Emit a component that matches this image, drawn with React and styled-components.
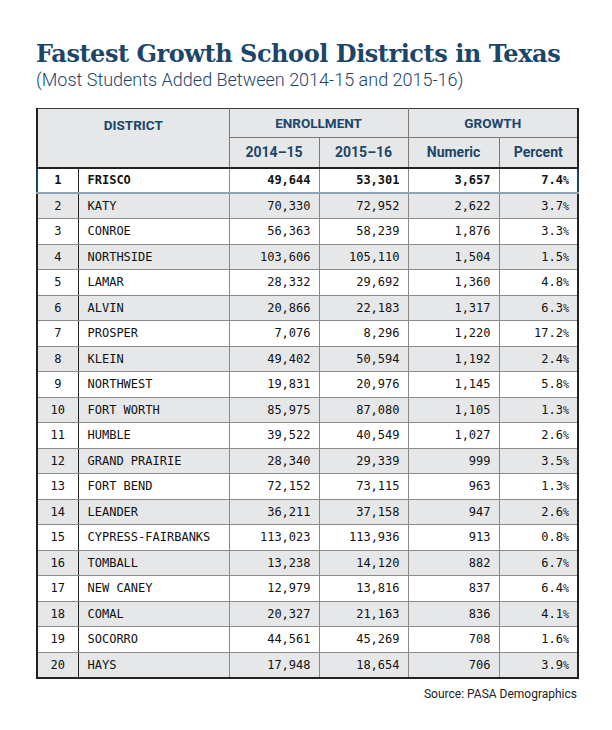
import React from "react";
import styled, { createGlobalStyle, css } from "styled-components";

const Global = createGlobalStyle`
  html, body { margin: 0; padding: 0; background: #ffffff; }
  body { font-family: Roboto, "Liberation Sans", sans-serif; }
`;

const BLUE = "#1b4669";

const Page = styled.div`
  width: 612px;
  height: 730px;
  box-sizing: border-box;
  padding: 40px 35px 0 36px;
  display: flex;
  flex-direction: column;
`;

const Title = styled.h1`
  margin: 0;
  font-family: "DejaVu Serif", serif;
  font-weight: 700;
  font-size: 24px;
  line-height: 28px;
  letter-spacing: -0.45px;
  color: ${BLUE};
`;

const Subtitle = styled.div`
  margin-top: 1px;
  font-family: Roboto, sans-serif;
  font-weight: 300;
  font-size: 18px;
  line-height: 22px;
  color: ${BLUE};
`;

const Table = styled.table`
  margin-top: 17px;
  width: 541px;
  border-collapse: collapse;
  table-layout: fixed;
  border-top: 1px solid #3a3a3a;
  border-left: 2px solid #222;
  border-right: 2px solid #222;
  border-bottom: 2px solid #222;
`;

const HeadCell = styled.th`
  background: #e6e7e9;
  color: ${BLUE};
  font-family: Roboto, sans-serif;
  font-weight: 700;
  font-size: ${(p) => (p.$sub ? "14px" : "13.5px")};
  text-align: center;
  vertical-align: ${(p) => (p.$top ? "top" : "middle")};
  padding: ${(p) => (p.$top ? "8px 0 0" : "0")};
  height: ${(p) => (p.$sub ? "30px" : "29px")};
  border-left: 1px solid #7a7a7a;
  border-bottom: ${(p) => (p.$last ? "2px solid #222" : "1px solid #7a7a7a")};
  box-sizing: border-box;
`;

const Row = styled.tr`
  background: ${(p) => (p.$alt ? "#e6e7e9" : "#ffffff")};
  ${(p) =>
    p.$lead &&
    css`
      font-weight: 700;
      & > td {
        border-bottom: 2px solid #8ea3b4;
      }
      & > td:first-child {
        border-left: 2px solid ${BLUE};
      }
      & > td:last-child {
        border-right: 2px solid ${BLUE};
      }
    `}
`;

const Cell = styled.td`
  height: 25.5px;
  padding: ${(p) =>
    p.$align === "left" ? "0 0 0 9px" : p.$align === "center" ? "0" : "0 8px 0 0"};
  font-family: "DejaVu Sans Mono", "Liberation Mono", monospace;
  font-size: 12px;
  color: #111;
  text-align: ${(p) => p.$align || "right"};
  border-bottom: 1px solid #8a8a8a;
  border-left: ${(p) => (p.$strong ? "1.5px solid #222" : "1.5px solid #8a8a8a")};
  box-sizing: border-box;
  white-space: nowrap;
`;

const Pct = styled.span`
  font-size: 10px;
`;

const Source = styled.div`
  margin-top: 8px;
  width: 541px;
  text-align: right;
  font-family: Roboto, sans-serif;
  font-size: 12px;
  color: #222;
`;

const data = [
  ["FRISCO", "49,644", "53,301", "3,657", "7.4"],
  ["KATY", "70,330", "72,952", "2,622", "3.7"],
  ["CONROE", "56,363", "58,239", "1,876", "3.3"],
  ["NORTHSIDE", "103,606", "105,110", "1,504", "1.5"],
  ["LAMAR", "28,332", "29,692", "1,360", "4.8"],
  ["ALVIN", "20,866", "22,183", "1,317", "6.3"],
  ["PROSPER", "7,076", "8,296", "1,220", "17.2"],
  ["KLEIN", "49,402", "50,594", "1,192", "2.4"],
  ["NORTHWEST", "19,831", "20,976", "1,145", "5.8"],
  ["FORT WORTH", "85,975", "87,080", "1,105", "1.3"],
  ["HUMBLE", "39,522", "40,549", "1,027", "2.6"],
  ["GRAND PRAIRIE", "28,340", "29,339", "999", "3.5"],
  ["FORT BEND", "72,152", "73,115", "963", "1.3"],
  ["LEANDER", "36,211", "37,158", "947", "2.6"],
  ["CYPRESS-FAIRBANKS", "113,023", "113,936", "913", "0.8"],
  ["TOMBALL", "13,238", "14,120", "882", "6.7"],
  ["NEW CANEY", "12,979", "13,816", "837", "6.4"],
  ["COMAL", "20,327", "21,163", "836", "4.1"],
  ["SOCORRO", "44,561", "45,269", "708", "1.6"],
  ["HAYS", "17,948", "18,654", "706", "3.9"],
];

export default function App() {
  return (
    <Page>
      <Global />
      <Title>Fastest Growth School Districts in Texas</Title>
      <Subtitle>(Most Students Added Between 2014-15 and 2015-16)</Subtitle>
      <Table>
        <colgroup>
          <col style={{ width: 41 }} />
          <col style={{ width: 151 }} />
          <col style={{ width: 90 }} />
          <col style={{ width: 89 }} />
          <col style={{ width: 91 }} />
          <col style={{ width: 79 }} />
        </colgroup>
        <thead>
          <tr>
            <HeadCell colSpan={2} rowSpan={2} $top $last>
              DISTRICT
            </HeadCell>
            <HeadCell colSpan={2}>ENROLLMENT</HeadCell>
            <HeadCell colSpan={2}>GROWTH</HeadCell>
          </tr>
          <tr>
            <HeadCell $sub $last>2014–15</HeadCell>
            <HeadCell $sub $last>2015–16</HeadCell>
            <HeadCell $sub $last>Numeric</HeadCell>
            <HeadCell $sub $last>Percent</HeadCell>
          </tr>
        </thead>
        <tbody>
          {data.map((d, i) => (
            <Row key={d[0]} $alt={i % 2 === 1} $lead={i === 0}>
              <Cell $align="center">{i + 1}</Cell>
              <Cell $align="left" $strong>{d[0]}</Cell>
              <Cell>{d[1]}</Cell>
              <Cell>{d[2]}</Cell>
              <Cell>{d[3]}</Cell>
              <Cell>
                {d[4]}
                <Pct>%</Pct>
              </Cell>
            </Row>
          ))}
        </tbody>
      </Table>
      <Source>Source: PASA Demographics</Source>
    </Page>
  );
}
